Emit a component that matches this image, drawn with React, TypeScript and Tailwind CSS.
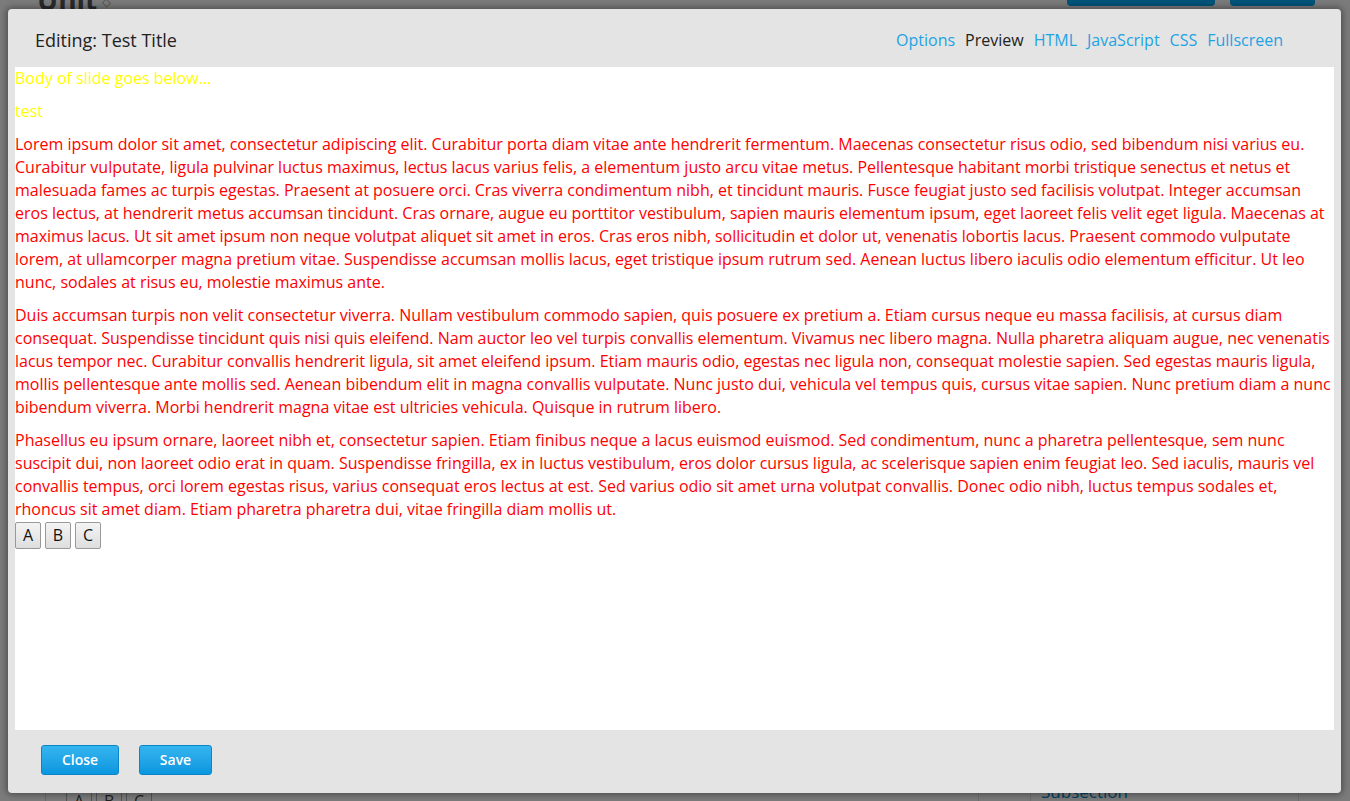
import React from "react";

const font = { fontFamily: '"Open Sans", "Noto Sans", sans-serif' };

const paragrafos = [
  "Lorem ipsum dolor sit amet, consectetur adipiscing elit. Curabitur porta diam vitae ante hendrerit fermentum. Maecenas consectetur risus odio, sed bibendum nisi varius eu. Curabitur vulputate, ligula pulvinar luctus maximus, lectus lacus varius felis, a elementum justo arcu vitae metus. Pellentesque habitant morbi tristique senectus et netus et malesuada fames ac turpis egestas. Praesent at posuere orci. Cras viverra condimentum nibh, et tincidunt mauris. Fusce feugiat justo sed facilisis volutpat. Integer accumsan eros lectus, at hendrerit metus accumsan tincidunt. Cras ornare, augue eu porttitor vestibulum, sapien mauris elementum ipsum, eget laoreet felis velit eget ligula. Maecenas at maximus lacus. Ut sit amet ipsum non neque volutpat aliquet sit amet in eros. Cras eros nibh, sollicitudin et dolor ut, venenatis lobortis lacus. Praesent commodo vulputate lorem, at ullamcorper magna pretium vitae. Suspendisse accumsan mollis lacus, eget tristique ipsum rutrum sed. Aenean luctus libero iaculis odio elementum efficitur. Ut leo nunc, sodales at risus eu, molestie maximus ante.",
  "Duis accumsan turpis non velit consectetur viverra. Nullam vestibulum commodo sapien, quis posuere ex pretium a. Etiam cursus neque eu massa facilisis, at cursus diam consequat. Suspendisse tincidunt quis nisi quis eleifend. Nam auctor leo vel turpis convallis elementum. Vivamus nec libero magna. Nulla pharetra aliquam augue, nec venenatis lacus tempor nec. Curabitur convallis hendrerit ligula, sit amet eleifend ipsum. Etiam mauris odio, egestas nec ligula non, consequat molestie sapien. Sed egestas mauris ligula, mollis pellentesque ante mollis sed. Aenean bibendum elit in magna convallis vulputate. Nunc justo dui, vehicula vel tempus quis, cursus vitae sapien. Nunc pretium diam a nunc bibendum viverra. Morbi hendrerit magna vitae est ultricies vehicula. Quisque in rutrum libero.",
  "Phasellus eu ipsum ornare, laoreet nibh et, consectetur sapien. Etiam finibus neque a lacus euismod euismod. Sed condimentum, nunc a pharetra pellentesque, sem nunc suscipit dui, non laoreet odio erat in quam. Suspendisse fringilla, ex in luctus vestibulum, eros dolor cursus ligula, ac scelerisque sapien enim feugiat leo. Sed iaculis, mauris vel convallis tempus, orci lorem egestas risus, varius consequat eros lectus at est. Sed varius odio sit amet urna volutpat convallis. Donec odio nibh, luctus tempus sodales et, rhoncus sit amet diam. Etiam pharetra pharetra dui, vitae fringilla diam mollis ut.",
];

const abas = ["Options", "Preview", "HTML", "JavaScript", "CSS", "Fullscreen"];

function BotaoAzul({ texto, largura }: { texto: string; largura: string }) {
  return (
    <button
      className={`${largura} h-[30px] rounded-[3px] border border-[#0a86c6] bg-gradient-to-b from-[#34b5f0] to-[#0896df] pb-[2px] text-[14px] font-semibold text-white`}
    >
      {texto}
    </button>
  );
}

export default function App() {
  return (
    <div className="relative h-[801px] w-full overflow-hidden bg-[#7b7b7b]" style={font}>
      {/* pagina ao fundo, escurecida */}
      <div className="absolute left-[37px] top-[-22px] text-[28px] font-bold text-[#2a2a2a]">Unit</div>
      <div className="absolute left-[103px] top-[0px] h-[6px] w-[7px] rotate-45 border border-[#5a5a5a]" />
      <div className="absolute left-[1067px] top-[-10px] h-[16px] w-[148px] rounded-[4px] bg-[#00537a]" />
      <div className="absolute left-[1230px] top-[-10px] h-[16px] w-[85px] rounded-[4px] bg-[#00537a]" />
      <div className="absolute left-[45px] top-[790px] h-[20px] w-px bg-[#6a6a6a]" />
      <div className="absolute left-[66px] top-[792px] flex gap-[4px] text-[16px] leading-none text-[#222]">
        <span className="h-[20px] w-[26px] border border-[#555] pl-[7px]">A</span>
        <span className="h-[20px] w-[26px] border border-[#555] pl-[7px]">B</span>
        <span className="h-[20px] w-[26px] border border-[#555] pl-[7px]">C</span>
      </div>
      <div className="absolute left-[978px] top-[790px] h-[20px] w-px bg-[#6e6e6e]" />
      <div className="absolute left-[1030px] top-[790px] h-[20px] w-px bg-[#6e6e6e]" />
      <div className="absolute left-[1298px] top-[790px] h-[20px] w-px bg-[#6e6e6e]" />
      <div className="absolute left-[1041px] top-[779px] text-[17px] text-[#00415f]">Subsection</div>

      {/* modal */}
      <div className="absolute left-[8px] top-[9px] flex h-[784px] w-[1333px] flex-col rounded-[4px] bg-[#e4e4e4] shadow-[0_0_6px_2px_rgba(0,0,0,0.35)]">
        <div className="flex h-[58px] items-center justify-between pl-[27px] pr-[58px] pt-[4px]">
          <h2 className="text-[18px] text-[#222]">Editing: Test Title</h2>
          <nav className="flex gap-[10px] text-[16px]">
            {abas.map((aba) => (
              <a key={aba} className={aba === "Preview" ? "text-[#222]" : "cursor-pointer text-[#1ea3e3]"}>
                {aba}
              </a>
            ))}
          </nav>
        </div>

        <div className="mx-[7px] h-[663px] bg-white text-[16px] leading-[23px]">
          <p className="mb-[10px] text-[#ffff00]">Body of slide goes below...</p>
          <p className="mb-[10px] text-[#ffff00]">test</p>
          {paragrafos.map((texto, i) => (
            <p key={i} className={i === paragrafos.length - 1 ? "text-[#ff0000]" : "mb-[10px] text-[#ff0000]"}>
              {texto}
            </p>
          ))}
          <div className="flex gap-[4px] pt-px">
            {["A", "B", "C"].map((letra) => (
              <button
                key={letra}
                className="h-[27px] w-[26px] rounded-[2px] border border-[#999] bg-gradient-to-b from-[#f4f4f4] to-[#dedede] text-[16px] text-[#111]"
              >
                {letra}
              </button>
            ))}
          </div>
        </div>

        <div className="flex gap-[20px] pl-[33px] pt-[15px]">
          <BotaoAzul texto="Close" largura="w-[78px]" />
          <BotaoAzul texto="Save" largura="w-[73px]" />
        </div>
      </div>
    </div>
  );
}
